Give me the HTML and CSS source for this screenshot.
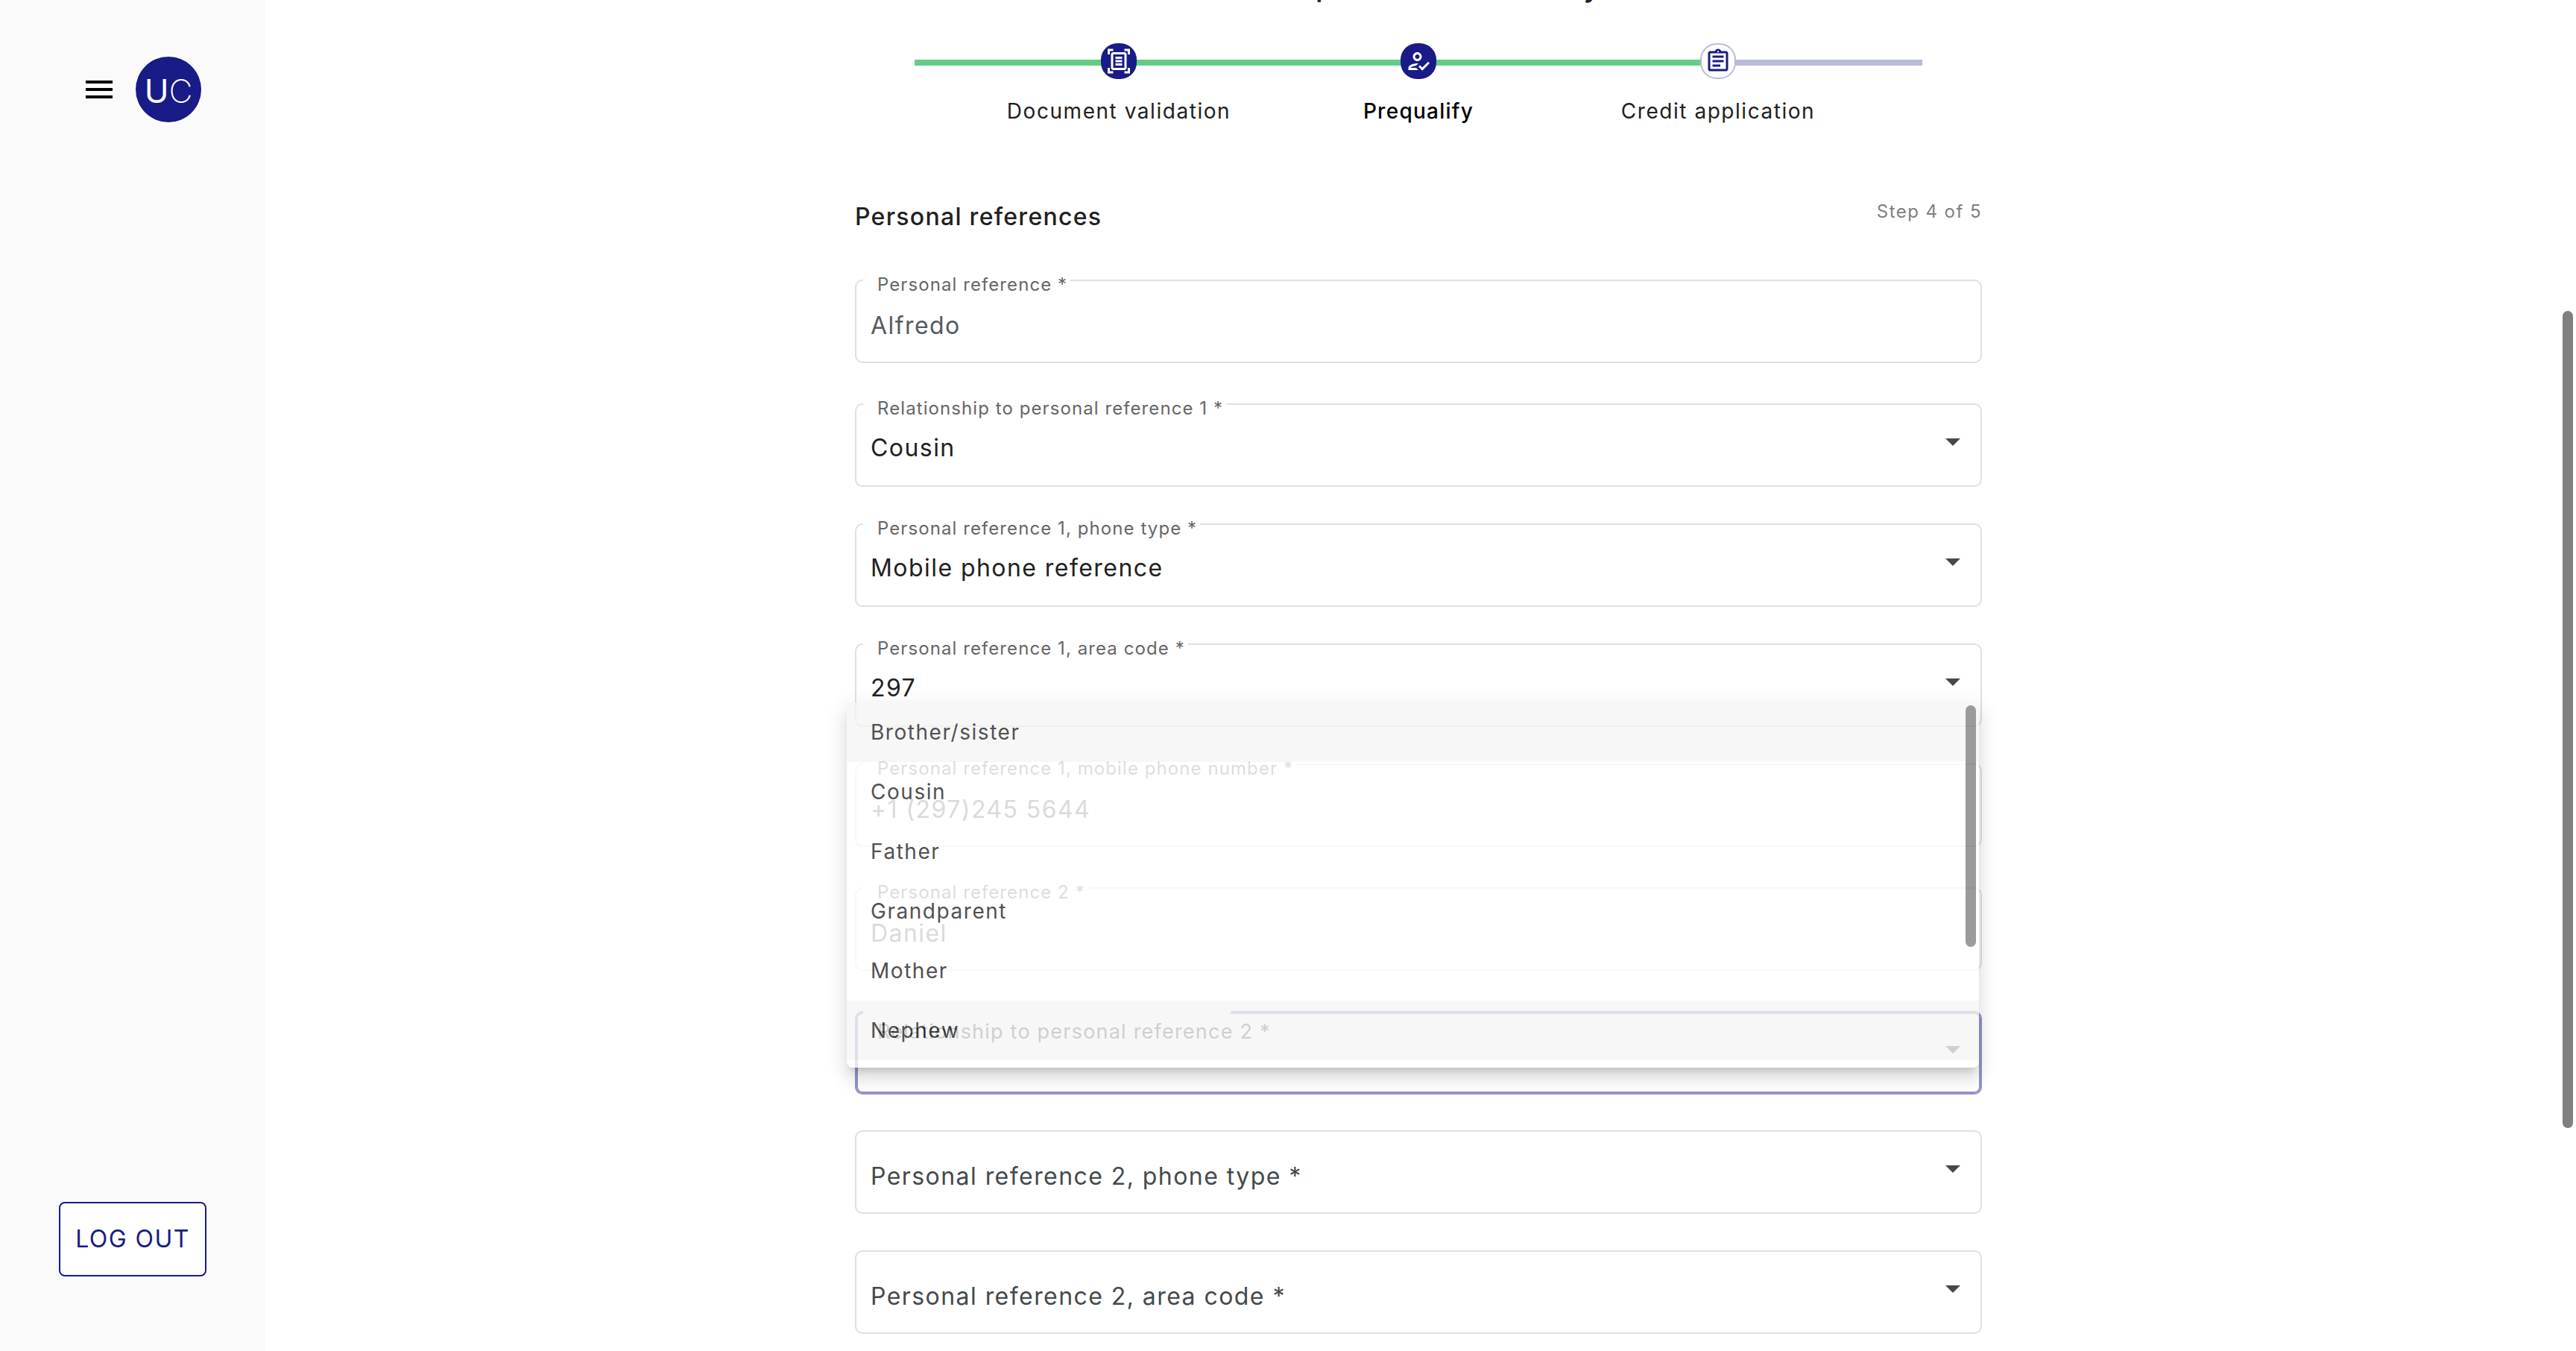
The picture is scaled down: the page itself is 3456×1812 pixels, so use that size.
FILE: index.html
```html
<!DOCTYPE html>
<html lang="en">
<head>
<meta charset="utf-8">
<meta name="viewport" content="width=device-width, initial-scale=1">
<title>Personal references</title>
<link rel="stylesheet" href="styles.css">
</head>
<body>
<div class="app">
  <aside class="sidebar">
    <div class="brand">
      <button class="menu-button" type="button" aria-label="Menu">
        <svg width="36" height="24" viewBox="0 0 36 24" aria-hidden="true"><path d="M0 0h36v4H0zM0 10h36v4H0zM0 20h36v4H0z"/></svg>
      </button>
      <div class="logo"><span class="logo-bold">U</span><span class="logo-thin">C</span></div>
    </div>
    <button class="logout" type="button">LOG OUT</button>
  </aside>

  <main class="main">
    <div class="column">
      <h1 class="title">Your personal summary</h1>

      <ol class="stepper">
        <li class="step">
          <span class="step-icon">
            <svg width="36" height="36" viewBox="0 0 24 24" aria-hidden="true"><path d="M7 3H4v3H2V1h5v2zm15 3V1h-5v2h3v3h2zM7 21H4v-3H2v5h5v-2zm13-3v3h-3v2h5v-5h-2zm-1 0c0 1.1-.9 2-2 2H7c-1.1 0-2-.9-2-2V6c0-1.1.9-2 2-2h10c1.1 0 2 .9 2 2v12zM17 6H7v12h10V6zm-2 2H9v2h6V8zm0 3H9v2h6v-2zm0 3H9v2h6v-2z"/></svg>
          </span>
          <span class="step-label">Document validation</span>
        </li>
        <li class="step step-current" aria-current="step">
          <span class="step-icon">
            <svg width="36" height="36" viewBox="0 0 24 24" aria-hidden="true"><path d="M11 12c2.21 0 4-1.79 4-4s-1.79-4-4-4-4 1.79-4 4 1.79 4 4 4zm0-6c1.1 0 2 .9 2 2s-.9 2-2 2-2-.9-2-2 .9-2 2-2zM5 18c.2-.63 2.57-1.68 4.96-1.94l2.04-2c-.39-.04-.68-.06-1-.06-2.67 0-8 1.34-8 4v2h9l-2-2H5zm15.6-5.5l-5.13 5.17-2.07-2.08L12 17l3.47 3.5L22 13.91z"/></svg>
          </span>
          <span class="step-label">Prequalify</span>
        </li>
        <li class="step step-next">
          <span class="step-icon">
            <svg width="36" height="36" viewBox="0 0 24 24" aria-hidden="true"><path d="M7 15h7v2H7zm0-4h10v2H7zm0-4h10v2H7zm12-4h-4.18C14.4 1.84 13.3 1 12 1s-2.4.84-2.82 2H5c-.14 0-.27.01-.4.04-.39.08-.74.28-1.01.55-.18.18-.33.4-.43.64-.1.23-.16.49-.16.77v14c0 .27.06.54.16.78s.25.45.43.64c.27.27.62.47 1.01.55.13.02.26.03.4.03h14c1.1 0 2-.9 2-2V5c0-1.1-.9-2-2-2zm-7-.25c.41 0 .75.34.75.75s-.34.75-.75.75-.75-.34-.75-.75.34-.75.75-.75zM19 19H5V5h14v14z"/></svg>
          </span>
          <span class="step-label">Credit application</span>
        </li>
      </ol>

      <header class="section-head">
        <h2>Personal references</h2>
        <p>Step 4 of 5</p>
      </header>

      <form class="form">
        <div class="field field-text">
          <label for="ref1">Personal reference *</label>
          <input id="ref1" type="text" value="Alfredo">
        </div>
        <div class="field field-select">
          <label for="rel1">Relationship to personal reference 1 *</label>
          <select id="rel1"><option>Cousin</option></select>
        </div>
        <div class="field field-select">
          <label for="type1">Personal reference 1, phone type *</label>
          <select id="type1"><option>Mobile phone reference</option></select>
        </div>
        <div class="field field-select">
          <label for="area1">Personal reference 1, area code *</label>
          <select id="area1"><option>297</option></select>
        </div>
        <div class="field field-text">
          <label for="phone1">Personal reference 1, mobile phone number *</label>
          <input id="phone1" type="tel" value="+1 (297)245 5644">
        </div>
        <div class="field field-text">
          <label for="ref2">Personal reference 2 *</label>
          <input id="ref2" type="text" value="Daniel">
        </div>
        <div class="field field-select field-open">
          <label for="rel2">Relationship to personal reference 2 *</label>
          <select id="rel2"><option value=""></option></select>
          <ul class="options" role="listbox" aria-label="Relationship">
            <li role="option" class="shaded">Brother/sister</li>
            <li role="option">Cousin</li>
            <li role="option">Father</li>
            <li role="option">Grandparent</li>
            <li role="option">Mother</li>
            <li role="option" class="shaded">Nephew</li>
          </ul>
        </div>
        <div class="field field-select field-empty">
          <label for="type2">Personal reference 2, phone type *</label>
          <select id="type2"><option value=""></option></select>
        </div>
        <div class="field field-select field-empty">
          <label for="area2">Personal reference 2, area code *</label>
          <select id="area2"><option value=""></option></select>
        </div>
      </form>
    </div>
  </main>
</div>
<div class="page-scroll" aria-hidden="true"></div>
</body>
</html>
```
FILE: styles.css
```css
:root {
  --navy: #191b87;
  --green: #63cd85;
  --lilac: #b9b9db;
  --line: #e0e0e0;
  --ink: #212121;
  --slate: #444a4c;
}

* { box-sizing: border-box; }

body {
  margin: 0;
  overflow: hidden;
  background: #fff;
  color: var(--ink);
  font-family: Inter, "Liberation Sans", sans-serif;
  font-size: 32px;
  line-height: 40px;
  letter-spacing: 0.045em;
}

button, input, select {
  font: inherit;
  letter-spacing: inherit;
}

.app { display: flex; }

/* Sidebar */
.sidebar {
  flex: 0 0 356px;
  display: flex;
  flex-direction: column;
  justify-content: space-between;
  height: 100vh;
  padding: 76px 0 100px;
  background: #fafafa;
}

.brand {
  display: flex;
  align-items: center;
  gap: 31px;
  padding-left: 115px;
}

.menu-button {
  display: flex;
  padding: 0;
  border: 0;
  background: none;
}

.logo {
  display: flex;
  align-items: center;
  justify-content: center;
  width: 88px;
  height: 88px;
  padding-top: 4px;
  border-radius: 50%;
  background: var(--navy);
  color: #fff;
  font-size: 44px;
  letter-spacing: 0;
}

.logo-bold { font-weight: 400; }
.logo-thin { font-weight: 200; }

.logout {
  align-self: center;
  width: 198px;
  height: 100px;
  padding: 0;
  border: 2px solid var(--navy);
  border-radius: 8px;
  background: #fff;
  color: var(--navy);
}

/* Main column */
.main {
  flex: 1;
  min-width: 0;
  padding-right: 6px;
}

.column {
  max-width: 1512px;
  margin: -43px auto 0;
}

.title {
  margin: 0;
  font-size: 40px;
  font-weight: 500;
  line-height: 48px;
  letter-spacing: 0.045em;
  text-align: center;
}

/* Stepper */
.stepper {
  position: relative;
  display: grid;
  grid-template-columns: repeat(3, 1fr);
  margin: 53px 80px 0;
  padding: 0 73px;
  list-style: none;
}

.stepper::before {
  content: "";
  position: absolute;
  top: 22px;
  left: 0;
  right: 0;
  height: 8px;
  background: linear-gradient(to right, var(--green) 80%, var(--lilac) 80%);
}

.step {
  position: relative;
  display: flex;
  flex-direction: column;
  align-items: center;
  gap: 25px;
}

.step-icon {
  display: flex;
  align-items: center;
  justify-content: center;
  width: 48px;
  height: 48px;
  border-radius: 22px;
  background: var(--navy);
  fill: #fff;
}

.step-next .step-icon {
  border: 2px solid var(--lilac);
  background: #fff;
  fill: var(--navy);
}

.step-label {
  font-size: 28px;
  line-height: 36px;
  letter-spacing: 0.055em;
}

.step-current .step-label {
  color: #000;
  font-weight: 500;
  letter-spacing: 0.045em;
}

/* Section heading */
.section-head {
  display: flex;
  justify-content: space-between;
  margin-top: 101px;
}

.section-head h2 {
  margin: 3px 0 0;
  font-size: 32px;
  font-weight: 500;
  line-height: 40px;
  letter-spacing: 0.04em;
}

.section-head p {
  margin: 0;
  color: #808080;
  font-size: 24px;
  line-height: 32px;
  letter-spacing: 0.06em;
}

/* Form */
.form { padding: 64px 0 23px; }

.field {
  position: relative;
  height: 112px;
  margin-bottom: 49px;
  border: 2px solid var(--line);
  border-radius: 10px;
}

.field:last-child { margin-bottom: 0; }

.field-text { margin-bottom: 54px; }

.field label {
  position: absolute;
  top: -11px;
  left: 9px;
  padding: 0 4px 0 19px;
  background: #fff;
  color: #666;
  font-size: 24px;
  line-height: 32px;
  letter-spacing: 0.045em;
  white-space: nowrap;
}

.field input,
.field select {
  appearance: none;
  display: block;
  width: 100%;
  height: 100%;
  padding: 10px 19px 0;
  border: 0;
  outline: 0;
  background: none;
  color: #555b5e;
  line-height: 40px;
}

.field select {
  padding-top: 8px;
  color: var(--ink);
}

.field-select::after {
  content: "";
  position: absolute;
  top: 45px;
  right: 27px;
  border: 10px solid transparent;
  border-top-color: var(--slate);
  border-bottom: 0;
}

.field.field-empty label {
  top: 40px;
  left: 19px;
  padding: 0;
  color: var(--slate);
  font-size: 32px;
  line-height: 40px;
}

/* Field with its list open */
.field-open {
  margin-bottom: 48px;
  border-color: #9394c8;
  box-shadow: inset 0 0 0 2px #9394c8;
}

.field-open::before {
  content: "";
  position: absolute;
  top: -2px;
  left: 9px;
  width: 493px;
  height: 4px;
  background: #fff;
}

.field.field-open label {
  top: 10px;
  background: none;
  color: var(--slate);
  font-size: 27px;
}

.options {
  position: absolute;
  left: -13px;
  right: 2px;
  bottom: 34px;
  z-index: 1;
  height: 490px;
  margin: 0;
  padding: 0;
  border-radius: 8px;
  background: #fff;
  box-shadow:
    0 10px 10px -6px rgba(0, 0, 0, 0.2),
    0 16px 20px 2px rgba(0, 0, 0, 0.1),
    0 6px 28px 4px rgba(0, 0, 0, 0.08);
  opacity: 0.78;
  list-style: none;
}

.options li {
  padding: 22px 32px;
  font-size: 28px;
  line-height: 36px;
  letter-spacing: 0.055em;
}

.options .shaded { background: #f5f5f5; }

.options::after {
  content: "";
  position: absolute;
  top: 4px;
  right: 4px;
  width: 14px;
  height: 324px;
  border-radius: 7px;
  background: #7f7f7f;
}

/* Page scroll thumb */
.page-scroll {
  position: fixed;
  top: 23%;
  right: 4px;
  width: 14px;
  height: 1096px;
  border-radius: 7px;
  background: #808080;
}
```
